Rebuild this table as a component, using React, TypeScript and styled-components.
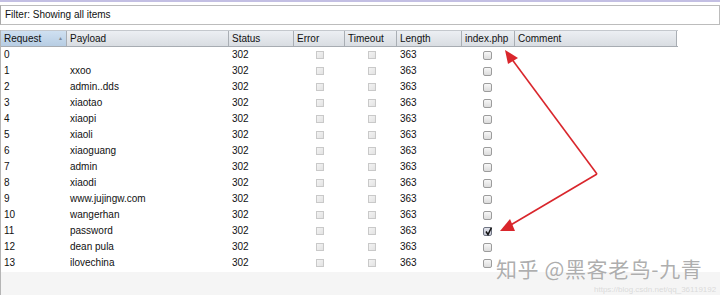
import React from "react";
import styled, { createGlobalStyle, css } from "styled-components";

const Global = createGlobalStyle`
  html, body { margin: 0; padding: 0; background: #fff; }
  body { font-family: "Liberation Sans", Arial, sans-serif; }
`;

const Page = styled.div`
  position: relative;
  width: 720px;
  height: 295px;
  overflow: hidden;
  background: #fff;
  border-top: 2px solid #c3bfe3;
  box-sizing: border-box;
  display: flex;
  flex-direction: column;
`;

const FilterBar = styled.div`
  margin-top: 3px;
  height: 20px;
  border: 1px solid #bcbcbc;
  border-left-color: #a9a9a9;
  box-sizing: border-box;
  padding-left: 4px;
  font-size: 10px;
  line-height: 18px;
  color: #111;
  background: #fff;
`;

const Table = styled.div`
  margin-top: 5px;
  display: flex;
  flex-direction: column;
  flex: 1;
  border-left: 1px solid #b5b5b5;
  background: #fff;
`;

const cols = "66px 162px 65px 51px 52px 65px 53px 162px";

const HeaderRow = styled.div`
  display: grid;
  grid-template-columns: ${cols};
  height: 17px;
  border-top: 1px solid #c4c8cd;
  border-bottom: 1px solid #a7acb2;
  box-sizing: border-box;
  width: 677px;
`;

const HeadCell = styled.div<{ $active?: boolean }>`
  position: relative;
  font-size: 10px;
  line-height: 15px;
  padding-left: 3px;
  color: #111;
  border-right: 1px solid #a9aeb4;
  background: linear-gradient(#eceff3, #d9dde2);
  ${(p) =>
    p.$active &&
    css`
      background: linear-gradient(#cfe0f1, #b7cde3);
    `}
`;

const SortArrow = styled.span`
  position: absolute;
  right: 3px;
  top: 0;
  font-size: 5px;
  color: #7d8a99;
`;

const Row = styled.div`
  display: grid;
  grid-template-columns: ${cols};
  height: 16px;
  width: 677px;
`;

const Cell = styled.div<{ $center?: boolean }>`
  font-size: 10px;
  line-height: 16px;
  color: #111;
  padding-left: ${(p) => (p.$center ? "0" : "3px")};
  display: flex;
  align-items: center;
  justify-content: ${(p) => (p.$center ? "center" : "flex-start")};
`;

const FaintBox = styled.span`
  width: 8px;
  height: 8px;
  box-sizing: border-box;
  border: 1px solid #c9c9c9;
  background: linear-gradient(135deg, #f3f3f3, #e3e3e3);
  margin-left: 1px;
`;

const Box = styled.span<{ $checked?: boolean }>`
  position: relative;
  width: 9px;
  height: 9px;
  box-sizing: border-box;
  border: 1px solid ${(p) => (p.$checked ? "#6f7482" : "#9c9c9c")};
  border-radius: 2px;
  background: ${(p) =>
    p.$checked ? "linear-gradient(#e0e2ea, #c3c6d3)" : "linear-gradient(#f7f7f7, #dcdcdc)"};
  margin-left: -3px;
`;

const Tick = styled.svg`
  position: absolute;
  left: 0;
  top: -2px;
`;

const Filler = styled.div`
  flex: 1;
  background: #f5f5f5;
  margin-top: 1px;
`;

const Overlay = styled.svg`
  position: absolute;
  left: 0;
  top: 0;
  pointer-events: none;
`;

const Watermark = styled.div`
  position: absolute;
  left: 496px;
  top: 251px;
  font-family: "Noto Sans CJK SC", "Liberation Sans", sans-serif;
  font-size: 21px;
  letter-spacing: 0.6px;
  color: rgba(160, 160, 160, 0.85);
  text-shadow: 0 0 1px #fff;
  white-space: nowrap;
`;

const Url = styled.div`
  position: absolute;
  left: 594px;
  top: 283px;
  font-size: 8px;
  color: rgba(200, 200, 200, 0.6);
  white-space: nowrap;
`;

const payloads = [
  "",
  "xxoo",
  "admin..dds",
  "xiaotao",
  "xiaopi",
  "xiaoli",
  "xiaoguang",
  "admin",
  "xiaodi",
  "www.jujingw.com",
  "wangerhan",
  "password",
  "dean pula",
  "ilovechina",
];

export default function App() {
  return (
    <>
      <Global />
      <Page>
        <FilterBar>Filter: Showing all items</FilterBar>
        <Table>
          <HeaderRow>
            <HeadCell $active>
              Request<SortArrow>▲</SortArrow>
            </HeadCell>
            <HeadCell>Payload</HeadCell>
            <HeadCell>Status</HeadCell>
            <HeadCell>Error</HeadCell>
            <HeadCell>Timeout</HeadCell>
            <HeadCell>Length</HeadCell>
            <HeadCell>index.php</HeadCell>
            <HeadCell>Comment</HeadCell>
          </HeaderRow>
          {payloads.map((p, i) => (
            <Row key={i}>
              <Cell>{i}</Cell>
              <Cell>{p}</Cell>
              <Cell>302</Cell>
              <Cell $center>
                <FaintBox />
              </Cell>
              <Cell $center>
                <FaintBox />
              </Cell>
              <Cell>363</Cell>
              <Cell $center>
                <Box $checked={i === 11}>
                  {i === 11 && (
                    <Tick width="10" height="10" viewBox="0 0 10 10">
                      <path d="M2 5.5 L4 8.5 L7.5 1.5" fill="none" stroke="#111" strokeWidth="1.5" />
                    </Tick>
                  )}
                </Box>
              </Cell>
              <Cell />
            </Row>
          ))}
          <Filler />
        </Table>
        <Overlay width="720" height="295" viewBox="0 0 720 295">
          <g stroke="#d9262c" strokeWidth="1.6" fill="none">
            <line x1="597" y1="172" x2="511" y2="56" />
            <line x1="597" y1="172" x2="509" y2="224" />
          </g>
          <g fill="#d9262c">
            <polygon points="505,48 518,56 508,62" />
            <polygon points="500,229 510,217 515,229" />
          </g>
        </Overlay>
        <Watermark>知乎 @黑客老鸟-九青</Watermark>
        <Url>https://blog.csdn.net/qq_36119192</Url>
      </Page>
    </>
  );
}
